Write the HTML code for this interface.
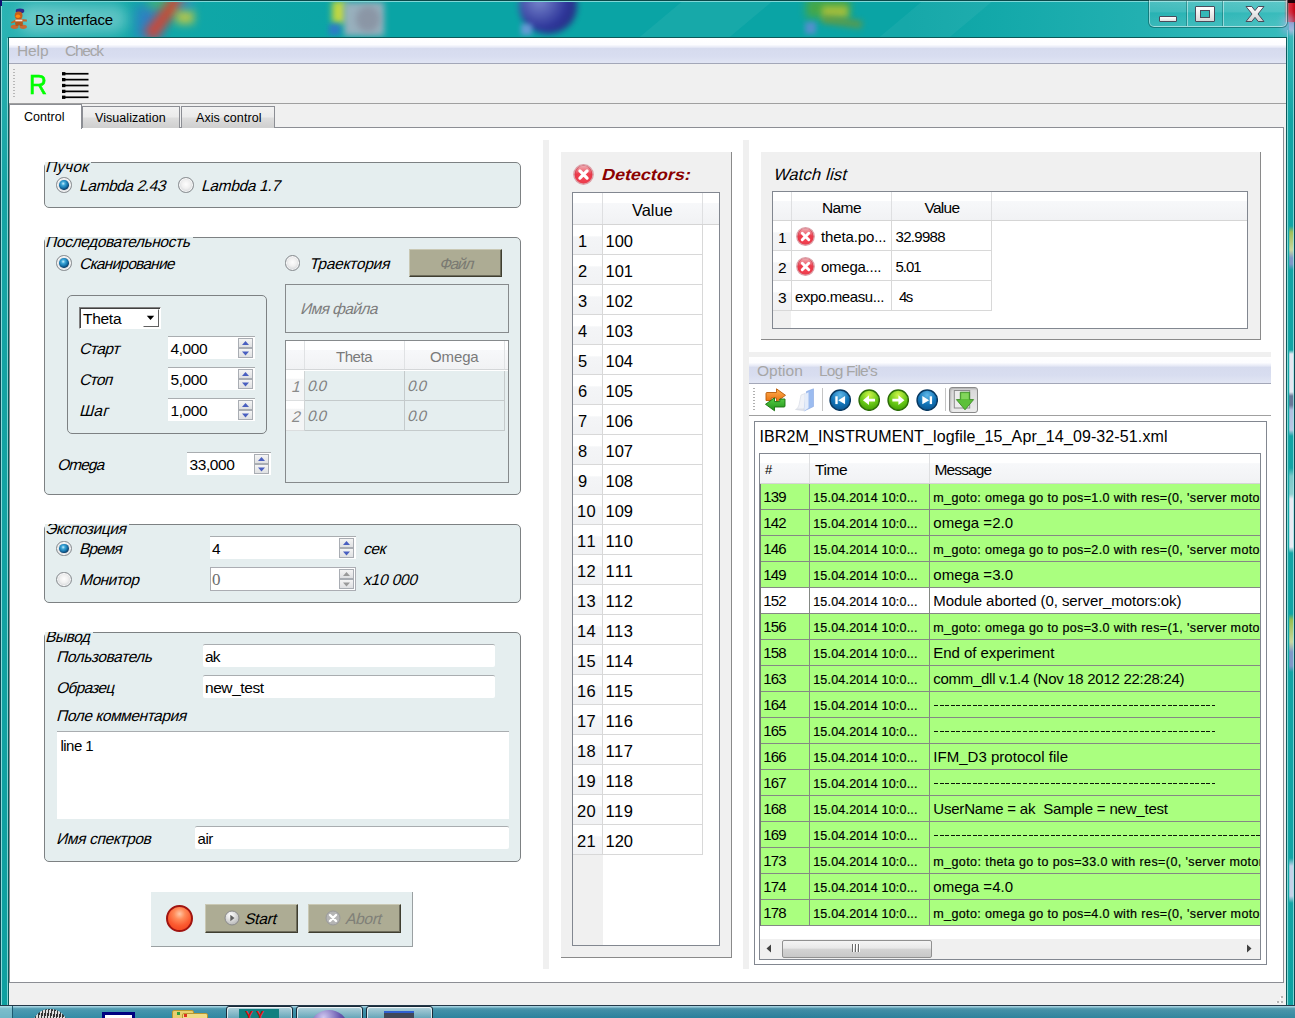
<!DOCTYPE html><html><head><meta charset="utf-8"><title>D3 interface</title><style>
*{box-sizing:border-box;margin:0;padding:0}
html,body{width:1295px;height:1018px;overflow:hidden}
body{position:relative;background:#0da5a6;font-family:"Liberation Sans",sans-serif;color:#000}
div,span,svg{position:absolute}
.t{white-space:nowrap;line-height:1;display:block}
.i{transform:skewX(-15deg);transform-origin:0 84.65%}
.b{font-weight:bold}
.gb{background:#e5eeef;border:1px solid #7d8183;border-radius:5px}
.gt{background:#e5eeef;overflow:hidden}
.inp{background:#fff;border-top:1px solid #a9adb0}
.btn{background:#adac94;border:1px solid;border-color:#c9c8b4 #3f3e30 #3f3e30 #c9c8b4;box-shadow:inset -1px -1px 0 #6e6d5c}
.hdr{background:linear-gradient(#fff 0%,#fff 31%,#f7f8fa 33%,#f1f2f4 100%)}
.rad{width:15.6px;height:15.6px;border-radius:50%;border:1px solid #868a8e;background:radial-gradient(circle at 50% 45%,#fdfdfd 0%,#f0f0f0 40%,#d2d5d8 75%,#c0c4c8 100%);box-shadow:inset 0 0 0 1px rgba(255,255,255,.7)}
.rad.on::after{content:"";position:absolute;left:2.1px;top:2.1px;width:9.4px;height:9.4px;border-radius:50%;background:radial-gradient(circle at 42% 36%,#c8f0ff 0%,#40a8d8 22%,#1878b0 48%,#0c3c68 72%,#0a2444 100%)}
.spb{background:linear-gradient(#f4f4f4,#dfe0e2);border:1px solid #a9adb3}

</style></head><body>
<div style="left:0;top:0;width:1295px;height:1018px;background:linear-gradient(90deg,#2bb3b3 0,#12a8a8 8%,#0aa4a5 30%,#0aa4a5 70%,#22b0b1 88%,#38bcbc 100%)"></div>
<div style="left:0;top:0;width:1295px;height:37px;overflow:hidden">
<div style="left:18px;top:4px;width:110px;height:30px;border-radius:15px;background:rgba(255,255,255,.32);filter:blur(7px)"></div>
<div style="left:136px;top:6px;width:26px;height:34px;background:#3b6fd0;filter:blur(6px);opacity:.7"></div>
<div style="left:148px;top:-4px;width:22px;height:14px;background:#58c058;filter:blur(5px);opacity:.55"></div>
<div style="left:158px;top:-10px;width:14px;height:52px;background:#e04028;filter:blur(4px);transform:rotate(38deg);opacity:.85"></div>
<div style="left:176px;top:10px;width:18px;height:14px;background:#e8d030;filter:blur(4px);opacity:.75"></div>
<div style="left:178px;top:-2px;width:16px;height:12px;background:#3b8fd0;filter:blur(4px);opacity:.5"></div>
<div style="left:332px;top:1px;width:14px;height:22px;background:#e0e030;filter:blur(3px);opacity:.85"></div>
<div style="left:344px;top:2px;width:40px;height:34px;background:#a8b2c0;filter:blur(3px);opacity:.9"></div>
<div style="left:356px;top:6px;width:24px;height:26px;border-radius:50%;background:#8890a0;filter:blur(3px);opacity:.8"></div>
<div style="left:329px;top:24px;width:11px;height:11px;background:#3b6fd0;filter:blur(2.5px);opacity:.75"></div>
<div style="left:519px;top:-22px;width:58px;height:56px;border-radius:50%;background:radial-gradient(circle at 35% 40%,#8088d0,#30309a 55%,#20206a);filter:blur(3px);opacity:.95"></div>
<div style="left:521px;top:24px;width:11px;height:11px;background:#7a9ae0;filter:blur(2.5px);opacity:.8"></div>
<div style="left:806px;top:-2px;width:44px;height:20px;background:#4fa838;filter:blur(4px);opacity:.85"></div>
<div style="left:822px;top:6px;width:26px;height:12px;background:#c8c838;filter:blur(3px);opacity:.7"></div>
<div style="left:822px;top:18px;width:40px;height:8px;background:#6a9838;filter:blur(3px);opacity:.8;transform:rotate(8deg)"></div>
<div style="left:805px;top:22px;width:11px;height:12px;background:#6a8ad8;filter:blur(2.5px);opacity:.75"></div>
<div style="left:660px;top:-5px;width:90px;height:50px;background:rgba(255,255,255,.055);transform:skewX(-50deg)"></div>
<div style="left:900px;top:-5px;width:70px;height:50px;background:rgba(255,255,255,.05);transform:skewX(-50deg)"></div>
</div>
<div style="left:0;top:0;width:1295px;height:1px;background:#0b4a4a"></div>
<div style="left:0;top:1px;width:1295px;height:1px;background:#7fd8d8"></div>
<div style="left:0;top:0;width:1px;height:1018px;background:#0b4a55"></div>
<div style="left:1px;top:1px;width:1px;height:1017px;background:#8adada"></div>
<div style="left:2px;top:38px;width:6px;height:968px;background:linear-gradient(#2ab0b0 0,#16a4a4 15%,#0ea0a0 100%)"></div>
<div style="left:7px;top:38px;width:1px;height:968px;background:#7fd4d4"></div>
<div style="left:0;top:0;width:2px;height:6px;background:#101070"></div>
<div style="left:1286px;top:37px;width:1px;height:969px;background:#0b5a5a"></div>
<div style="left:1287px;top:0;width:8px;height:1006px;background:linear-gradient(#38b8b8 0,#12a4a4 120px,#0ea0a0 100%)"></div>
<div style="left:1289px;top:0;width:6px;height:1006px;background:linear-gradient(#c00010 0px,#d83040 18px,#8aa0d0 24px,#a0c0d8 30px,#38b8b8 36px,#12a4a4 120px,#12a4a4 226px,#a0c058 232px,#c8d8a0 250px,#8098c8 258px,#8098c8 264px,#12a4a4 270px,#12a4a4 350px,#e4e8f2 354px,#e4e8f2 392px,#687898 396px,#687898 405px,#b0c0e0 410px,#b8c8e4 430px,#12a4a4 436px,#12a4a4 468px,#7cc8c8 476px,#90d0d0 494px,#e8ecf4 499px,#e8ecf4 547px,#12a4a4 553px,#12a4a4 614px,#98c050 620px,#c8d8a0 642px,#8098c8 652px,#8098c8 666px,#12a4a4 672px,#12a4a4 858px,#c4d2e8 866px,#c4d2e8 896px,#12a4a4 903px,#0ea0a0 1005px)"></div>
<div style="left:1288px;top:30px;width:2px;height:976px;background:linear-gradient(90deg,#18a8a8,rgba(24,168,168,.0))"></div>
<div style="left:1287px;top:30px;width:1px;height:976px;background:#86d8d8"></div>
<div style="left:1293px;top:30px;width:1px;height:976px;background:rgba(160,230,230,.75)"></div>
<div style="left:1294px;top:6px;width:1px;height:1000px;background:#0b4a55"></div>
<div style="left:1284px;top:0;width:11px;height:22px;background:linear-gradient(90deg,rgba(224,48,64,0) 0,rgba(224,48,64,.85) 45%,#d02030 70%,#c00010 100%)"></div>
<div style="left:1282px;top:16px;width:13px;height:18px;background:#9ab0e0;filter:blur(3px);opacity:.55"></div>
<div style="left:1288px;top:0;width:7px;height:3px;background:#200008"></div>
<svg style="left:10px;top:8px" width="18" height="22" viewBox="0 0 18 22">
<ellipse cx="10" cy="3" rx="4.3" ry="2.4" fill="#2c2c8c"/>
<ellipse cx="8.6" cy="7.4" rx="3.9" ry="4" fill="#c4601c"/>
<ellipse cx="8" cy="8.2" rx="2.2" ry="1.7" fill="#ff8c10"/>
<rect x="5.2" y="10.5" width="7.6" height="7" rx="2.2" fill="#b4581c"/>
<path d="M0.8 14.3 L5.5 11.4 L12.5 11.2 L16.8 11.6 L17 13.4 L12.5 13.6 L5.8 14 L1.4 15.4 Z" fill="#c06428"/>
<rect x="5.4" y="11.6" width="7" height="1.7" fill="#ece4dc"/>
<ellipse cx="4.6" cy="18.8" rx="3.9" ry="2.1" fill="#c86a34"/>
<ellipse cx="13.2" cy="18.8" rx="3.7" ry="2.1" fill="#c86a34"/>
<rect x="5.6" y="15" width="2.6" height="3" fill="#b4581c"/><rect x="10" y="15" width="2.6" height="3" fill="#b4581c"/>
</svg>
<span class="t " style="left:35px;top:11px;font-size:15px;letter-spacing:-0.261px;line-height:17px;color:#000;">D3 interface</span>
<div style="left:1149px;top:0;width:138px;height:27px;border:1px solid rgba(255,255,255,.45);border-top:none;border-radius:0 0 5px 5px;background:linear-gradient(rgba(255,255,255,.20),rgba(255,255,255,.12) 45%,rgba(255,255,255,.02) 50%,rgba(255,255,255,.10))"></div>
<div style="left:1148px;top:0;width:140px;height:28px;border:1px solid rgba(0,60,60,.45);border-top:none;border-radius:0 0 6px 6px"></div>
<div style="left:1187px;top:1px;width:1px;height:25px;background:rgba(255,255,255,.45)"></div><div style="left:1186px;top:1px;width:1px;height:25px;background:rgba(0,70,70,.35)"></div>
<div style="left:1223px;top:1px;width:1px;height:25px;background:rgba(255,255,255,.45)"></div><div style="left:1222px;top:1px;width:1px;height:25px;background:rgba(0,70,70,.35)"></div>
<div style="left:1159px;top:16px;width:18px;height:6px;background:linear-gradient(#fff,#e0e0e0);border:1px solid #4a4a5a;border-radius:1px"></div>
<div style="left:1195px;top:6px;width:20px;height:16px;background:linear-gradient(#fff,#d8d8d8);border:1px solid #4a4a5a;border-radius:1px"></div>
<div style="left:1200px;top:10px;width:10px;height:8px;background:#34b8b8;border:1px solid #4a4a5a"></div>
<svg style="left:1245px;top:5px" width="20" height="18" viewBox="0 0 20 18"><defs><linearGradient id="xg" x1="0" y1="0" x2="0" y2="1"><stop offset="0" stop-color="#fff"/><stop offset="1" stop-color="#d0d0d0"/></linearGradient></defs>
<path d="M1 1.5 L6.8 1.5 L10 5.6 L13.2 1.5 L19 1.5 L13 9 L19 16.5 L13.2 16.5 L10 12.4 L6.8 16.5 L1 16.5 L7 9 Z" fill="url(#xg)" stroke="#4a4a5a" stroke-width="1" stroke-linejoin="round"/></svg>
<div style="left:8px;top:37px;width:1279px;height:969px;background:#0b5a5a"></div>
<div style="left:9px;top:38px;width:1277px;height:967px;background:#f0f0f0"></div>
<div style="left:9px;top:38px;width:1277px;height:26px;background:linear-gradient(#fff 0,#fdfdff 25%,#e6e9f6 36%,#d6dbee 40%,#d8ddf0 70%,#e2e6f4 100%)"></div>
<div style="left:9px;top:63px;width:1277px;height:1px;background:#a3a7b8"></div>
<span class="t " style="left:17px;top:42px;font-size:15.5px;letter-spacing:-0.126px;line-height:17px;color:#a6a6a6;">Help</span>
<span class="t " style="left:65px;top:42px;font-size:15.5px;letter-spacing:-1.234px;line-height:17px;color:#a6a6a6;">Check</span>
<div style="left:9px;top:103px;width:1277px;height:1px;background:#a0a0a0"></div>
<div style="left:13px;top:69px;width:2px;height:30px;background:repeating-linear-gradient(#b8b8b8 0,#b8b8b8 1px,#f0f0f0 1px,#f0f0f0 3px)"></div>
<span class="t " style="left:28.5px;top:69px;font-size:28px;transform:scaleX(0.8902);transform-origin:0 80.65%;line-height:31px;color:#00ff00;-webkit-text-stroke:0.6px #00ff00;">R</span>
<svg style="left:61.5px;top:71.5px" width="27" height="27" viewBox="0 0 27 27">
<g fill="#000"><rect x="1" y="0.90" width="25.5" height="1.7"/><rect x="0" y="0.10" width="3.4" height="3.3"/><rect x="1" y="6.78" width="25.5" height="1.7"/><rect x="0" y="5.98" width="3.4" height="3.3"/><rect x="1" y="12.66" width="25.5" height="1.7"/><rect x="0" y="11.86" width="3.4" height="3.3"/><rect x="1" y="18.54" width="25.5" height="1.7"/><rect x="0" y="17.74" width="3.4" height="3.3"/><rect x="1" y="24.42" width="25.5" height="1.7"/><rect x="0" y="23.62" width="3.4" height="3.3"/></g></svg>
<div style="left:9px;top:127px;width:1275px;height:856px;background:#fff;border:1px solid #8c8e94"></div>
<div style="left:82px;top:106px;width:98px;height:22px;border:1px solid #8c8e94;border-bottom:none;background:linear-gradient(#f2f2f2 0,#ebebeb 48%,#dddddd 52%,#cfcfcf 100%)"></div>
<div style="left:181px;top:106px;width:94px;height:22px;border:1px solid #8c8e94;border-bottom:none;background:linear-gradient(#f2f2f2 0,#ebebeb 48%,#dddddd 52%,#cfcfcf 100%)"></div>
<div style="left:9px;top:104px;width:73px;height:25px;border:1px solid #8c8e94;border-bottom:none;background:#fff"></div>
<span class="t " style="left:24px;top:110px;font-size:12.5px;letter-spacing:0.051px;line-height:14px;">Control</span>
<span class="t " style="left:95px;top:111px;font-size:12.5px;letter-spacing:0.054px;line-height:14px;">Visualization</span>
<span class="t " style="left:196px;top:111px;font-size:12.5px;letter-spacing:0.081px;line-height:14px;">Axis control</span>
<svg style="left:1271px;top:992px" width="14" height="14" viewBox="0 0 14 14" shape-rendering="crispEdges"><g fill="#b4b4b4"><rect x="10" y="4" width="2" height="2"/><rect x="10" y="8.5" width="2" height="2"/><rect x="5.5" y="8.5" width="2" height="2"/><rect x="10" y="13" width="2" height="1"/><rect x="5.5" y="13" width="2" height="1"/><rect x="1" y="13" width="2" height="1"/></g><g fill="#fff"><rect x="9" y="5" width="1" height="1.5"/><rect x="9" y="9.5" width="1" height="1.5"/><rect x="4.5" y="9.5" width="1" height="1.5"/></g></svg>
<div style="left:0;top:1005px;width:1295px;height:13px;background:linear-gradient(90deg,#368ea8 0,#2d86a0 20%,#297e9a 60%,#34889f 100%)"></div>
<div style="left:0;top:1005px;width:1295px;height:13px;background:linear-gradient(rgba(255,255,255,.55) 0,rgba(255,255,255,.28) 12%,rgba(255,255,255,.10) 40%,rgba(255,255,255,0) 100%)"></div>
<div style="left:0;top:1005px;width:1295px;height:1px;background:#243848"></div>
<div style="left:0;top:1006px;width:1295px;height:2px;background:linear-gradient(rgba(200,236,248,.75),rgba(200,236,248,.15))"></div>
<div style="left:0;top:1006px;width:13px;height:12px;background:rgba(180,230,235,.45);border-right:1px solid #1d5a70"></div>
<div style="left:33px;top:1009px;width:34px;height:30px;border-radius:50%;background:repeating-linear-gradient(100deg,#333 0,#333 1.5px,#ddd 1.5px,#ddd 3px)"></div>
<div style="left:102px;top:1012px;width:33px;height:20px;border:3px solid #000080;background:#fff"></div>
<div style="left:172px;top:1010px;width:22px;height:12px;background:#e8d070;border:1px solid #b89830;border-radius:2px"></div>
<div style="left:182px;top:1013px;width:26px;height:12px;background:#f0dc88;border:1px solid #b89830;border-radius:2px"></div>
<div style="left:177px;top:1012px;width:3px;height:3px;background:#30a040"></div><div style="left:184px;top:1014px;width:3px;height:3px;background:#e03020"></div>
<div style="left:226px;top:1006px;width:67px;height:16px;border:1px solid #1a2a38;border-radius:3px 3px 0 0;background:linear-gradient(rgba(255,255,255,.55),rgba(255,255,255,.2))"></div>
<div style="left:227px;top:1007px;width:65px;height:15px;border:1px solid rgba(255,255,255,.7);border-radius:3px 3px 0 0"></div>
<div style="left:296px;top:1006px;width:67px;height:16px;border:1px solid #1a2a38;border-radius:3px 3px 0 0;background:linear-gradient(rgba(255,255,255,.55),rgba(255,255,255,.2))"></div>
<div style="left:297px;top:1007px;width:65px;height:15px;border:1px solid rgba(255,255,255,.7);border-radius:3px 3px 0 0"></div>
<div style="left:366px;top:1006px;width:67px;height:16px;border:1px solid #1a2a38;border-radius:3px 3px 0 0;background:linear-gradient(rgba(255,255,255,.55),rgba(255,255,255,.2))"></div>
<div style="left:367px;top:1007px;width:65px;height:15px;border:1px solid rgba(255,255,255,.7);border-radius:3px 3px 0 0"></div>
<div style="left:239px;top:1009px;width:40px;height:12px;background:#108080"></div>
<span class="t b" style="left:245px;top:1009px;font-size:12px;line-height:14px;color:#e01010;">Y  Y</span>
<div style="left:311px;top:1010px;width:36px;height:30px;border-radius:50%;background:radial-gradient(circle at 35% 25%,#d0c8f0,#6a5ab0 50%,#30287a)"></div>
<div style="left:384px;top:1011px;width:30px;height:10px;background:#404858;border-top:2px solid #3060d0"></div>
<div class="gb" style="left:44px;top:162px;width:477px;height:46px;"></div><div class="gt" style="left:45px;top:162px;width:46px;height:13px"><span class="t i" style="left:0px;top:-4px;font-size:15.5px;letter-spacing:0.108px;line-height:17px;transform-origin:0 82.35%;">Пучок</span></div>
<div class="rad on" style="left:56.1px;top:177.2px"></div>
<span class="t i" style="left:79px;top:177px;font-size:15.5px;letter-spacing:-0.419px;line-height:17px;transform-origin:0 82.35%;">Lambda 2.43</span>
<div class="rad" style="left:178.1px;top:177.2px"></div>
<span class="t i" style="left:201px;top:177px;font-size:15.5px;letter-spacing:-0.341px;line-height:17px;transform-origin:0 82.35%;">Lambda 1.7</span>
<div class="gb" style="left:44px;top:237px;width:477px;height:258px;"></div><div class="gt" style="left:45px;top:237px;width:148px;height:13px"><span class="t i" style="left:0px;top:-4px;font-size:15.5px;letter-spacing:-0.370px;line-height:17px;transform-origin:0 82.35%;">Последовательность</span></div>
<div class="rad on" style="left:56.1px;top:255.2px"></div>
<span class="t i" style="left:79px;top:255px;font-size:15.5px;letter-spacing:-0.774px;line-height:17px;transform-origin:0 82.35%;">Сканирование</span>
<div class="rad" style="left:284.6px;top:255.2px"></div>
<span class="t i" style="left:309px;top:255px;font-size:15.5px;letter-spacing:-0.259px;line-height:17px;transform-origin:0 82.35%;">Траектория</span>
<div class="btn" style="left:409px;top:249px;width:93px;height:28px;"></div>
<span class="t i" style="left:438.5px;top:255px;font-size:15.5px;letter-spacing:-1.269px;line-height:17px;color:#7a7a72;transform-origin:0 82.35%;">Файл</span>
<div class="" style="left:285px;top:284px;width:224px;height:49px;border:1px solid #868a8c;background:#e5eeef"></div>
<span class="t i" style="left:299.5px;top:300px;font-size:15.5px;letter-spacing:-0.612px;line-height:17px;color:#7d7d7d;transform-origin:0 82.35%;">Имя файла</span>
<div class="gb" style="left:67px;top:295px;width:200px;height:139px;"></div>
<div class="" style="left:79px;top:307px;width:82px;height:22px;background:#fff;border:1px solid;border-color:#808080 #fff #fff #808080;box-shadow:inset 1px 1px 0 #404040"></div>
<span class="t " style="left:83px;top:310px;font-size:15.5px;letter-spacing:-0.284px;line-height:17px;">Theta</span>
<div class="" style="left:143px;top:309px;width:16px;height:18px;background:#fff;border:1px solid;border-color:#fff #606060 #606060 #fff"></div>
<svg style="left:146px;top:315px" width="9" height="6" viewBox="0 0 9 6"><path d="M0.8 0.8 L8.2 0.8 L4.5 5 Z" fill="#000"/></svg>
<span class="t i" style="left:79px;top:340px;font-size:15.5px;letter-spacing:-0.455px;line-height:17px;transform-origin:0 82.35%;">Старт</span>
<div class="inp" style="left:168px;top:336px;width:87px;height:23px;"></div><span class="t " style="left:170.5px;top:340px;font-size:15.5px;letter-spacing:-0.447px;line-height:17px;color:#000;">4,000</span><div class="spb" style="left:238px;top:337.5px;width:15px;height:10px"></div><div class="spb" style="left:238px;top:347.5px;width:15px;height:10px"></div><svg style="left:238px;top:337.5px" width="15" height="10" viewBox="0 0 15 10"><path d="M4 7 L7.5 3 L11 7 Z" fill="#4a5fc0"/></svg><svg style="left:238px;top:347.5px" width="15" height="10" viewBox="0 0 15 10"><path d="M4 3.5 L7.5 7.5 L11 3.5 Z" fill="#4a5fc0"/></svg>
<span class="t i" style="left:79px;top:371px;font-size:15.5px;letter-spacing:-0.677px;line-height:17px;transform-origin:0 82.35%;">Стоп</span>
<div class="inp" style="left:168px;top:367px;width:87px;height:23px;"></div><span class="t " style="left:170.5px;top:371px;font-size:15.5px;letter-spacing:-0.447px;line-height:17px;color:#000;">5,000</span><div class="spb" style="left:238px;top:368.5px;width:15px;height:10px"></div><div class="spb" style="left:238px;top:378.5px;width:15px;height:10px"></div><svg style="left:238px;top:368.5px" width="15" height="10" viewBox="0 0 15 10"><path d="M4 7 L7.5 3 L11 7 Z" fill="#4a5fc0"/></svg><svg style="left:238px;top:378.5px" width="15" height="10" viewBox="0 0 15 10"><path d="M4 3.5 L7.5 7.5 L11 3.5 Z" fill="#4a5fc0"/></svg>
<span class="t i" style="left:79px;top:402px;font-size:15.5px;letter-spacing:0.160px;line-height:17px;transform-origin:0 82.35%;">Шаг</span>
<div class="inp" style="left:168px;top:398px;width:87px;height:23px;"></div><span class="t " style="left:170.5px;top:402px;font-size:15.5px;letter-spacing:-0.447px;line-height:17px;color:#000;">1,000</span><div class="spb" style="left:238px;top:399.5px;width:15px;height:10px"></div><div class="spb" style="left:238px;top:409.5px;width:15px;height:10px"></div><svg style="left:238px;top:399.5px" width="15" height="10" viewBox="0 0 15 10"><path d="M4 7 L7.5 3 L11 7 Z" fill="#4a5fc0"/></svg><svg style="left:238px;top:409.5px" width="15" height="10" viewBox="0 0 15 10"><path d="M4 3.5 L7.5 7.5 L11 3.5 Z" fill="#4a5fc0"/></svg>
<span class="t i" style="left:56.5px;top:456px;font-size:15.5px;letter-spacing:-0.932px;line-height:17px;transform-origin:0 82.35%;">Omega</span>
<div class="inp" style="left:187px;top:452px;width:84px;height:23px;"></div><span class="t " style="left:189.5px;top:456px;font-size:15.5px;letter-spacing:-0.422px;line-height:17px;color:#000;">33,000</span><div class="spb" style="left:254px;top:453.5px;width:15px;height:10px"></div><div class="spb" style="left:254px;top:463.5px;width:15px;height:10px"></div><svg style="left:254px;top:453.5px" width="15" height="10" viewBox="0 0 15 10"><path d="M4 7 L7.5 3 L11 7 Z" fill="#4a5fc0"/></svg><svg style="left:254px;top:463.5px" width="15" height="10" viewBox="0 0 15 10"><path d="M4 3.5 L7.5 7.5 L11 3.5 Z" fill="#4a5fc0"/></svg>
<div class="" style="left:285px;top:340px;width:224px;height:143px;border:1px solid #868a8c;background:#e5eeef"></div>
<div class="hdr" style="left:286px;top:341px;width:222px;height:28px;"></div>
<div class="" style="left:286px;top:370px;width:222px;height:1px;background:#fff"></div>
<div class="" style="left:286px;top:371px;width:18px;height:60px;background:linear-gradient(#fff 0,#fff 12%,#f4f5f6 14%,#f4f5f6 50%,#fff 50%,#fff 62%,#f4f5f6 64%,#f4f5f6 100%)"></div>
<div class="" style="left:286px;top:369px;width:222px;height:1px;background:#d4d6d8"></div>
<div class="" style="left:304px;top:341px;width:1px;height:28px;background:#e0e2e4"></div>
<div class="" style="left:404px;top:341px;width:1px;height:28px;background:#e0e2e4"></div>
<div class="" style="left:404px;top:371px;width:1px;height:60px;background:#c4cacb"></div>
<div class="" style="left:504px;top:341px;width:1px;height:28px;background:#e0e2e4"></div>
<div class="" style="left:504px;top:371px;width:1px;height:60px;background:#c4cacb"></div>
<div class="" style="left:304px;top:371px;width:1px;height:60px;background:#d0d4d5"></div>
<div class="" style="left:305px;top:400px;width:200px;height:1px;background:#c4cacb"></div>
<div class="" style="left:305px;top:430px;width:200px;height:1px;background:#c4cacb"></div>
<div class="" style="left:286px;top:400px;width:18px;height:1px;background:#dcdedf"></div>
<div class="" style="left:286px;top:430px;width:18px;height:1px;background:#dcdedf"></div>
<span class="t " style="left:336px;top:348px;font-size:15px;letter-spacing:-0.464px;line-height:17px;color:#7a7a7a;">Theta</span>
<span class="t " style="left:430px;top:348px;font-size:15px;letter-spacing:-0.122px;line-height:17px;color:#7a7a7a;">Omega</span>
<span class="t i" style="left:290.5px;top:378px;font-size:15.5px;line-height:17px;color:#8a8a8a;transform-origin:0 82.35%;">1</span>
<span class="t i" style="left:290.5px;top:408px;font-size:15.5px;line-height:17px;color:#8a8a8a;transform-origin:0 82.35%;">2</span>
<span class="t i" style="left:307px;top:377px;font-size:15px;letter-spacing:-1.026px;line-height:17px;color:#808080;transform-origin:0 82.35%;">0.0</span>
<span class="t i" style="left:407px;top:377px;font-size:15px;letter-spacing:-1.026px;line-height:17px;color:#808080;transform-origin:0 82.35%;">0.0</span>
<span class="t i" style="left:307px;top:407px;font-size:15px;letter-spacing:-1.026px;line-height:17px;color:#808080;transform-origin:0 82.35%;">0.0</span>
<span class="t i" style="left:407px;top:407px;font-size:15px;letter-spacing:-1.026px;line-height:17px;color:#808080;transform-origin:0 82.35%;">0.0</span>
<div class="gb" style="left:44px;top:524px;width:477px;height:79px;"></div><div class="gt" style="left:45px;top:524px;width:84px;height:13px"><span class="t i" style="left:0px;top:-4px;font-size:15.5px;letter-spacing:-0.398px;line-height:17px;transform-origin:0 82.35%;">Экспозиция</span></div>
<div class="rad on" style="left:56.1px;top:540.7px"></div>
<span class="t i" style="left:79px;top:540px;font-size:15.5px;letter-spacing:-1.007px;line-height:17px;transform-origin:0 82.35%;">Время</span>
<div class="rad" style="left:56.1px;top:571.7px"></div>
<span class="t i" style="left:79px;top:571px;font-size:15.5px;letter-spacing:-0.548px;line-height:17px;transform-origin:0 82.35%;">Монитор</span>
<div class="inp" style="left:209.5px;top:536px;width:146px;height:23px;"></div><span class="t " style="left:212.0px;top:540px;font-size:15.5px;line-height:17px;color:#000;">4</span><div class="spb" style="left:338.5px;top:537.5px;width:15px;height:10px"></div><div class="spb" style="left:338.5px;top:547.5px;width:15px;height:10px"></div><svg style="left:338.5px;top:537.5px" width="15" height="10" viewBox="0 0 15 10"><path d="M4 7 L7.5 3 L11 7 Z" fill="#4a5fc0"/></svg><svg style="left:338.5px;top:547.5px" width="15" height="10" viewBox="0 0 15 10"><path d="M4 3.5 L7.5 7.5 L11 3.5 Z" fill="#4a5fc0"/></svg>
<div class="inp" style="left:209.5px;top:567px;width:146px;height:23.5px;border:1px solid #abadb3;"></div><span class="t " style="left:212.0px;top:570px;font-size:17px;line-height:19px;color:#6d6d6d;font-family:'Liberation Serif',serif;">0</span><div class="spb" style="left:338.5px;top:568.5px;width:15px;height:10px"></div><div class="spb" style="left:338.5px;top:579.0px;width:15px;height:10px"></div><svg style="left:338.5px;top:568.5px" width="15" height="10" viewBox="0 0 15 10"><path d="M4 7 L7.5 3 L11 7 Z" fill="#9a9a9a"/></svg><svg style="left:338.5px;top:579.0px" width="15" height="10" viewBox="0 0 15 10"><path d="M4 3.5 L7.5 7.5 L11 3.5 Z" fill="#9a9a9a"/></svg>
<span class="t i" style="left:363px;top:540px;font-size:15.5px;letter-spacing:-0.426px;line-height:17px;transform-origin:0 82.35%;">сек</span>
<span class="t i" style="left:363px;top:571px;font-size:15.5px;letter-spacing:-0.226px;line-height:17px;transform-origin:0 82.35%;">x10 000</span>
<div class="gb" style="left:44px;top:632px;width:477px;height:230px;"></div><div class="gt" style="left:45px;top:632px;width:48px;height:13px"><span class="t i" style="left:0px;top:-4px;font-size:15.5px;letter-spacing:-0.516px;line-height:17px;transform-origin:0 82.35%;">Вывод</span></div>
<span class="t i" style="left:56px;top:648px;font-size:15.5px;letter-spacing:-0.435px;line-height:17px;transform-origin:0 82.35%;">Пользователь</span>
<div class="inp" style="left:202.5px;top:644px;width:292.5px;height:23px;border-radius:2px"></div>
<span class="t " style="left:205px;top:648px;font-size:15.5px;letter-spacing:-0.870px;line-height:17px;">ak</span>
<span class="t i" style="left:56px;top:679px;font-size:15.5px;letter-spacing:-0.722px;line-height:17px;transform-origin:0 82.35%;">Образец</span>
<div class="inp" style="left:202.5px;top:675px;width:292.5px;height:23px;border-radius:2px"></div>
<span class="t " style="left:205px;top:679px;font-size:15.5px;letter-spacing:-0.434px;line-height:17px;">new_test</span>
<span class="t i" style="left:56px;top:707px;font-size:15.5px;letter-spacing:-0.439px;line-height:17px;transform-origin:0 82.35%;">Поле комментария</span>
<div class="inp" style="left:56.5px;top:731px;width:452.5px;height:87.5px;border-radius:0"></div>
<span class="t " style="left:60.5px;top:737px;font-size:15px;letter-spacing:-0.532px;line-height:17px;">line 1</span>
<span class="t i" style="left:56px;top:830px;font-size:15.5px;letter-spacing:-0.363px;line-height:17px;transform-origin:0 82.35%;">Имя спектров</span>
<div class="inp" style="left:195px;top:826px;width:314px;height:23px;border-radius:2px"></div>
<span class="t " style="left:197.5px;top:830px;font-size:15px;letter-spacing:-0.435px;line-height:17px;">air</span>
<div class="" style="left:151px;top:892px;width:262px;height:55px;background:#e5eeef;border-right:1px solid #9aa0a2;border-bottom:1px solid #9aa0a2"></div>
<div style="left:165.5px;top:904.5px;width:27px;height:27px;border-radius:50%;border:2px solid #a01410;background:radial-gradient(circle at 50% 30%,#ffc8a8 0,#ff8a58 28%,#fb5a30 60%,#ee3c18 100%)"></div>
<div class="btn" style="left:205px;top:904px;width:93px;height:29px;"></div>
<div class="btn" style="left:308px;top:904px;width:93px;height:29px;"></div>
<svg style="left:224px;top:910px" width="16" height="16" viewBox="0 0 16 16"><defs><radialGradient id="pg" cx=".4" cy=".3" r=".8"><stop offset="0" stop-color="#fff"/><stop offset="1" stop-color="#b0b0b0"/></radialGradient></defs><circle cx="8" cy="8" r="7" fill="url(#pg)" stroke="#8a8a8a" stroke-width="1"/><path d="M6.3 4.8 L10.5 8 L6.3 11.2 Z" fill="#606060"/></svg>
<span class="t i" style="left:244px;top:910px;font-size:15.5px;letter-spacing:-0.233px;line-height:17px;transform-origin:0 82.35%;">Start</span>
<svg style="left:325px;top:910px" width="16" height="16" viewBox="0 0 16 16"><circle cx="8" cy="8" r="7" fill="#b4b4b4" stroke="#9a9a9a" stroke-width="1"/><path d="M5 5 L11 11 M11 5 L5 11" stroke="#fff" stroke-width="2.4" stroke-linecap="round"/></svg>
<span class="t i" style="left:344.5px;top:910px;font-size:15.5px;letter-spacing:-0.312px;line-height:17px;color:#808078;transform-origin:0 82.35%;">Abort</span>
<div class="" style="left:543px;top:140px;width:6px;height:829px;background:#f0f0f0"></div>
<div class="" style="left:561px;top:152px;width:171px;height:806px;background:#f0f0f0;border-right:1px solid #8a8a8a;border-bottom:1px solid #8a8a8a"></div>
<svg style="left:572.5px;top:163.5px" width="21" height="21" viewBox="0 0 20 20"><defs>
<radialGradient id="egd" cx=".5" cy=".6" r=".6"><stop offset="0" stop-color="#f84858"/><stop offset=".7" stop-color="#e83848"/><stop offset="1" stop-color="#c82838"/></radialGradient>
<linearGradient id="ehd" x1="0" y1="0" x2="0" y2="1"><stop offset="0" stop-color="#fff" stop-opacity=".6"/><stop offset="1" stop-color="#fff" stop-opacity=".05"/></linearGradient></defs>
<circle cx="10" cy="10" r="9.2" fill="url(#egd)" stroke="#dca0a8" stroke-width="1.4"/>
<path d="M2.2 9.5 A7.8 7.8 0 0 1 17.8 9.5 Q10 6.5 2.2 9.5 Z" fill="url(#ehd)"/>
<path d="M6.6 6.6 L13.4 13.4 M13.4 6.6 L6.6 13.4" stroke="#fff" stroke-width="3.1" stroke-linecap="round"/></svg>
<span class="t b i" style="left:601px;top:166px;font-size:16px;transform:skewX(-15deg) scaleX(1.1196);transform-origin:0 82.35%;line-height:17px;color:#8b0000;">Detectors:</span>
<div class="" style="left:572px;top:192px;width:148px;height:754px;background:#fff;border:1px solid #828790"></div>
<div class="hdr" style="left:573px;top:193px;width:146px;height:31px;"></div>
<div class="" style="left:573px;top:224px;width:146px;height:1px;background:#d5d5d5"></div>
<div class="" style="left:602px;top:193px;width:1px;height:31px;background:#dedfe1"></div>
<div class="" style="left:702px;top:193px;width:1px;height:31px;background:#dedfe1"></div>
<span class="t " style="left:632px;top:201px;font-size:16.5px;letter-spacing:-0.044px;line-height:18px;">Value</span>
<div class="" style="left:573px;top:225px;width:30px;height:720px;background:#f0f0f0"></div>
<div class="" style="left:573px;top:225px;width:29px;height:30px;background:linear-gradient(#fff 0,#fff 35%,#f4f5f7 40%,#f1f2f4 100%)"></div>
<div class="" style="left:573px;top:254px;width:29px;height:1px;background:#d8d8d8"></div>
<div class="" style="left:602px;top:254px;width:101px;height:1px;background:#d8d8d8"></div>
<span class="t " style="left:578px;top:232px;font-size:16.5px;letter-spacing:0.323px;line-height:18px;">1</span>
<span class="t " style="left:605.5px;top:232px;font-size:16.5px;letter-spacing:-0.015px;line-height:18px;">100</span>
<div class="" style="left:573px;top:255px;width:29px;height:30px;background:linear-gradient(#fff 0,#fff 35%,#f4f5f7 40%,#f1f2f4 100%)"></div>
<div class="" style="left:573px;top:284px;width:29px;height:1px;background:#d8d8d8"></div>
<div class="" style="left:602px;top:284px;width:101px;height:1px;background:#d8d8d8"></div>
<span class="t " style="left:578px;top:262px;font-size:16.5px;letter-spacing:0.323px;line-height:18px;">2</span>
<span class="t " style="left:605.5px;top:262px;font-size:16.5px;letter-spacing:-0.015px;line-height:18px;">101</span>
<div class="" style="left:573px;top:285px;width:29px;height:30px;background:linear-gradient(#fff 0,#fff 35%,#f4f5f7 40%,#f1f2f4 100%)"></div>
<div class="" style="left:573px;top:314px;width:29px;height:1px;background:#d8d8d8"></div>
<div class="" style="left:602px;top:314px;width:101px;height:1px;background:#d8d8d8"></div>
<span class="t " style="left:578px;top:292px;font-size:16.5px;letter-spacing:0.323px;line-height:18px;">3</span>
<span class="t " style="left:605.5px;top:292px;font-size:16.5px;letter-spacing:-0.015px;line-height:18px;">102</span>
<div class="" style="left:573px;top:315px;width:29px;height:30px;background:linear-gradient(#fff 0,#fff 35%,#f4f5f7 40%,#f1f2f4 100%)"></div>
<div class="" style="left:573px;top:344px;width:29px;height:1px;background:#d8d8d8"></div>
<div class="" style="left:602px;top:344px;width:101px;height:1px;background:#d8d8d8"></div>
<span class="t " style="left:578px;top:322px;font-size:16.5px;letter-spacing:0.323px;line-height:18px;">4</span>
<span class="t " style="left:605.5px;top:322px;font-size:16.5px;letter-spacing:-0.015px;line-height:18px;">103</span>
<div class="" style="left:573px;top:345px;width:29px;height:30px;background:linear-gradient(#fff 0,#fff 35%,#f4f5f7 40%,#f1f2f4 100%)"></div>
<div class="" style="left:573px;top:374px;width:29px;height:1px;background:#d8d8d8"></div>
<div class="" style="left:602px;top:374px;width:101px;height:1px;background:#d8d8d8"></div>
<span class="t " style="left:578px;top:352px;font-size:16.5px;letter-spacing:0.323px;line-height:18px;">5</span>
<span class="t " style="left:605.5px;top:352px;font-size:16.5px;letter-spacing:-0.015px;line-height:18px;">104</span>
<div class="" style="left:573px;top:375px;width:29px;height:30px;background:linear-gradient(#fff 0,#fff 35%,#f4f5f7 40%,#f1f2f4 100%)"></div>
<div class="" style="left:573px;top:404px;width:29px;height:1px;background:#d8d8d8"></div>
<div class="" style="left:602px;top:404px;width:101px;height:1px;background:#d8d8d8"></div>
<span class="t " style="left:578px;top:382px;font-size:16.5px;letter-spacing:0.323px;line-height:18px;">6</span>
<span class="t " style="left:605.5px;top:382px;font-size:16.5px;letter-spacing:-0.015px;line-height:18px;">105</span>
<div class="" style="left:573px;top:405px;width:29px;height:30px;background:linear-gradient(#fff 0,#fff 35%,#f4f5f7 40%,#f1f2f4 100%)"></div>
<div class="" style="left:573px;top:434px;width:29px;height:1px;background:#d8d8d8"></div>
<div class="" style="left:602px;top:434px;width:101px;height:1px;background:#d8d8d8"></div>
<span class="t " style="left:578px;top:412px;font-size:16.5px;letter-spacing:0.323px;line-height:18px;">7</span>
<span class="t " style="left:605.5px;top:412px;font-size:16.5px;letter-spacing:-0.015px;line-height:18px;">106</span>
<div class="" style="left:573px;top:435px;width:29px;height:30px;background:linear-gradient(#fff 0,#fff 35%,#f4f5f7 40%,#f1f2f4 100%)"></div>
<div class="" style="left:573px;top:464px;width:29px;height:1px;background:#d8d8d8"></div>
<div class="" style="left:602px;top:464px;width:101px;height:1px;background:#d8d8d8"></div>
<span class="t " style="left:578px;top:442px;font-size:16.5px;letter-spacing:0.323px;line-height:18px;">8</span>
<span class="t " style="left:605.5px;top:442px;font-size:16.5px;letter-spacing:-0.015px;line-height:18px;">107</span>
<div class="" style="left:573px;top:465px;width:29px;height:30px;background:linear-gradient(#fff 0,#fff 35%,#f4f5f7 40%,#f1f2f4 100%)"></div>
<div class="" style="left:573px;top:494px;width:29px;height:1px;background:#d8d8d8"></div>
<div class="" style="left:602px;top:494px;width:101px;height:1px;background:#d8d8d8"></div>
<span class="t " style="left:578px;top:472px;font-size:16.5px;letter-spacing:0.323px;line-height:18px;">9</span>
<span class="t " style="left:605.5px;top:472px;font-size:16.5px;letter-spacing:-0.015px;line-height:18px;">108</span>
<div class="" style="left:573px;top:495px;width:29px;height:30px;background:linear-gradient(#fff 0,#fff 35%,#f4f5f7 40%,#f1f2f4 100%)"></div>
<div class="" style="left:573px;top:524px;width:29px;height:1px;background:#d8d8d8"></div>
<div class="" style="left:602px;top:524px;width:101px;height:1px;background:#d8d8d8"></div>
<span class="t " style="left:577px;top:502px;font-size:16.5px;letter-spacing:0.447px;line-height:18px;">10</span>
<span class="t " style="left:605.5px;top:502px;font-size:16.5px;letter-spacing:-0.015px;line-height:18px;">109</span>
<div class="" style="left:573px;top:525px;width:29px;height:30px;background:linear-gradient(#fff 0,#fff 35%,#f4f5f7 40%,#f1f2f4 100%)"></div>
<div class="" style="left:573px;top:554px;width:29px;height:1px;background:#d8d8d8"></div>
<div class="" style="left:602px;top:554px;width:101px;height:1px;background:#d8d8d8"></div>
<span class="t " style="left:577px;top:532px;font-size:16.5px;letter-spacing:1.671px;line-height:18px;">11</span>
<span class="t " style="left:605.5px;top:532px;font-size:16.5px;letter-spacing:0.597px;line-height:18px;">110</span>
<div class="" style="left:573px;top:555px;width:29px;height:30px;background:linear-gradient(#fff 0,#fff 35%,#f4f5f7 40%,#f1f2f4 100%)"></div>
<div class="" style="left:573px;top:584px;width:29px;height:1px;background:#d8d8d8"></div>
<div class="" style="left:602px;top:584px;width:101px;height:1px;background:#d8d8d8"></div>
<span class="t " style="left:577px;top:562px;font-size:16.5px;letter-spacing:0.447px;line-height:18px;">12</span>
<span class="t " style="left:605.5px;top:562px;font-size:16.5px;letter-spacing:1.210px;line-height:18px;">111</span>
<div class="" style="left:573px;top:585px;width:29px;height:30px;background:linear-gradient(#fff 0,#fff 35%,#f4f5f7 40%,#f1f2f4 100%)"></div>
<div class="" style="left:573px;top:614px;width:29px;height:1px;background:#d8d8d8"></div>
<div class="" style="left:602px;top:614px;width:101px;height:1px;background:#d8d8d8"></div>
<span class="t " style="left:577px;top:592px;font-size:16.5px;letter-spacing:0.447px;line-height:18px;">13</span>
<span class="t " style="left:605.5px;top:592px;font-size:16.5px;letter-spacing:0.597px;line-height:18px;">112</span>
<div class="" style="left:573px;top:615px;width:29px;height:30px;background:linear-gradient(#fff 0,#fff 35%,#f4f5f7 40%,#f1f2f4 100%)"></div>
<div class="" style="left:573px;top:644px;width:29px;height:1px;background:#d8d8d8"></div>
<div class="" style="left:602px;top:644px;width:101px;height:1px;background:#d8d8d8"></div>
<span class="t " style="left:577px;top:622px;font-size:16.5px;letter-spacing:0.447px;line-height:18px;">14</span>
<span class="t " style="left:605.5px;top:622px;font-size:16.5px;letter-spacing:0.597px;line-height:18px;">113</span>
<div class="" style="left:573px;top:645px;width:29px;height:30px;background:linear-gradient(#fff 0,#fff 35%,#f4f5f7 40%,#f1f2f4 100%)"></div>
<div class="" style="left:573px;top:674px;width:29px;height:1px;background:#d8d8d8"></div>
<div class="" style="left:602px;top:674px;width:101px;height:1px;background:#d8d8d8"></div>
<span class="t " style="left:577px;top:652px;font-size:16.5px;letter-spacing:0.447px;line-height:18px;">15</span>
<span class="t " style="left:605.5px;top:652px;font-size:16.5px;letter-spacing:0.597px;line-height:18px;">114</span>
<div class="" style="left:573px;top:675px;width:29px;height:30px;background:linear-gradient(#fff 0,#fff 35%,#f4f5f7 40%,#f1f2f4 100%)"></div>
<div class="" style="left:573px;top:704px;width:29px;height:1px;background:#d8d8d8"></div>
<div class="" style="left:602px;top:704px;width:101px;height:1px;background:#d8d8d8"></div>
<span class="t " style="left:577px;top:682px;font-size:16.5px;letter-spacing:0.447px;line-height:18px;">16</span>
<span class="t " style="left:605.5px;top:682px;font-size:16.5px;letter-spacing:0.597px;line-height:18px;">115</span>
<div class="" style="left:573px;top:705px;width:29px;height:30px;background:linear-gradient(#fff 0,#fff 35%,#f4f5f7 40%,#f1f2f4 100%)"></div>
<div class="" style="left:573px;top:734px;width:29px;height:1px;background:#d8d8d8"></div>
<div class="" style="left:602px;top:734px;width:101px;height:1px;background:#d8d8d8"></div>
<span class="t " style="left:577px;top:712px;font-size:16.5px;letter-spacing:0.447px;line-height:18px;">17</span>
<span class="t " style="left:605.5px;top:712px;font-size:16.5px;letter-spacing:0.597px;line-height:18px;">116</span>
<div class="" style="left:573px;top:735px;width:29px;height:30px;background:linear-gradient(#fff 0,#fff 35%,#f4f5f7 40%,#f1f2f4 100%)"></div>
<div class="" style="left:573px;top:764px;width:29px;height:1px;background:#d8d8d8"></div>
<div class="" style="left:602px;top:764px;width:101px;height:1px;background:#d8d8d8"></div>
<span class="t " style="left:577px;top:742px;font-size:16.5px;letter-spacing:0.447px;line-height:18px;">18</span>
<span class="t " style="left:605.5px;top:742px;font-size:16.5px;letter-spacing:0.597px;line-height:18px;">117</span>
<div class="" style="left:573px;top:765px;width:29px;height:30px;background:linear-gradient(#fff 0,#fff 35%,#f4f5f7 40%,#f1f2f4 100%)"></div>
<div class="" style="left:573px;top:794px;width:29px;height:1px;background:#d8d8d8"></div>
<div class="" style="left:602px;top:794px;width:101px;height:1px;background:#d8d8d8"></div>
<span class="t " style="left:577px;top:772px;font-size:16.5px;letter-spacing:0.447px;line-height:18px;">19</span>
<span class="t " style="left:605.5px;top:772px;font-size:16.5px;letter-spacing:0.597px;line-height:18px;">118</span>
<div class="" style="left:573px;top:795px;width:29px;height:30px;background:linear-gradient(#fff 0,#fff 35%,#f4f5f7 40%,#f1f2f4 100%)"></div>
<div class="" style="left:573px;top:824px;width:29px;height:1px;background:#d8d8d8"></div>
<div class="" style="left:602px;top:824px;width:101px;height:1px;background:#d8d8d8"></div>
<span class="t " style="left:577px;top:802px;font-size:16.5px;letter-spacing:0.447px;line-height:18px;">20</span>
<span class="t " style="left:605.5px;top:802px;font-size:16.5px;letter-spacing:0.597px;line-height:18px;">119</span>
<div class="" style="left:573px;top:825px;width:29px;height:30px;background:linear-gradient(#fff 0,#fff 35%,#f4f5f7 40%,#f1f2f4 100%)"></div>
<div class="" style="left:573px;top:854px;width:29px;height:1px;background:#d8d8d8"></div>
<div class="" style="left:602px;top:854px;width:101px;height:1px;background:#d8d8d8"></div>
<span class="t " style="left:577px;top:832px;font-size:16.5px;letter-spacing:0.447px;line-height:18px;">21</span>
<span class="t " style="left:605.5px;top:832px;font-size:16.5px;letter-spacing:-0.015px;line-height:18px;">120</span>
<div class="" style="left:602px;top:225px;width:1px;height:630px;background:#d8d8d8"></div>
<div class="" style="left:702px;top:225px;width:1px;height:630px;background:#d8d8d8"></div>
<div class="" style="left:743px;top:140px;width:6px;height:829px;background:#f0f0f0"></div>
<div class="" style="left:761px;top:152px;width:500px;height:188px;background:#f0f0f0;border-right:1px solid #8a8a8a;border-bottom:1px solid #8a8a8a"></div>
<span class="t i" style="left:773px;top:165px;font-size:16.5px;letter-spacing:0.211px;line-height:18px;transform-origin:0 83.33%;">Watch list</span>
<div class="" style="left:772px;top:191px;width:476px;height:138px;background:#fff;border:1px solid #828790"></div>
<div class="hdr" style="left:773px;top:192px;width:474px;height:28px;"></div>
<div class="" style="left:773px;top:220px;width:474px;height:1px;background:#d5d5d5"></div>
<div class="" style="left:773px;top:221px;width:18px;height:107px;background:#f0f0f0"></div>
<div class="" style="left:791px;top:192px;width:1px;height:28px;background:#dedfe1"></div>
<div class="" style="left:891px;top:192px;width:1px;height:28px;background:#dedfe1"></div>
<div class="" style="left:991px;top:192px;width:1px;height:28px;background:#dedfe1"></div>
<span class="t " style="left:822px;top:199px;font-size:15.5px;letter-spacing:-0.615px;line-height:17px;">Name</span>
<span class="t " style="left:924.5px;top:199px;font-size:15.5px;letter-spacing:-0.748px;line-height:17px;">Value</span>
<div class="" style="left:773px;top:221px;width:18px;height:30px;background:linear-gradient(#fff 0,#fff 35%,#f4f5f7 40%,#f1f2f4 100%)"></div>
<div class="" style="left:773px;top:250px;width:18px;height:1px;background:#d8d8d8"></div>
<div class="" style="left:791px;top:250px;width:201px;height:1px;background:#d8d8d8"></div>
<span class="t " style="left:778px;top:229px;font-size:15.5px;letter-spacing:-0.820px;line-height:17px;">1</span>
<svg style="left:795.5px;top:227.2px" width="19" height="19" viewBox="0 0 20 20"><defs>
<radialGradient id="egw0" cx=".5" cy=".6" r=".6"><stop offset="0" stop-color="#f84858"/><stop offset=".7" stop-color="#e83848"/><stop offset="1" stop-color="#c82838"/></radialGradient>
<linearGradient id="ehw0" x1="0" y1="0" x2="0" y2="1"><stop offset="0" stop-color="#fff" stop-opacity=".6"/><stop offset="1" stop-color="#fff" stop-opacity=".05"/></linearGradient></defs>
<circle cx="10" cy="10" r="9.2" fill="url(#egw0)" stroke="#dca0a8" stroke-width="1.4"/>
<path d="M2.2 9.5 A7.8 7.8 0 0 1 17.8 9.5 Q10 6.5 2.2 9.5 Z" fill="url(#ehw0)"/>
<path d="M6.6 6.6 L13.4 13.4 M13.4 6.6 L6.6 13.4" stroke="#fff" stroke-width="3.1" stroke-linecap="round"/></svg>
<span class="t " style="left:821px;top:228px;font-size:15px;letter-spacing:-0.122px;line-height:17px;">theta.po...</span>
<span class="t " style="left:895.5px;top:228px;font-size:15px;letter-spacing:-0.704px;line-height:17px;">32.9988</span>
<div class="" style="left:773px;top:251px;width:18px;height:30px;background:linear-gradient(#fff 0,#fff 35%,#f4f5f7 40%,#f1f2f4 100%)"></div>
<div class="" style="left:773px;top:280px;width:18px;height:1px;background:#d8d8d8"></div>
<div class="" style="left:791px;top:280px;width:201px;height:1px;background:#d8d8d8"></div>
<span class="t " style="left:778px;top:259px;font-size:15.5px;letter-spacing:-0.820px;line-height:17px;">2</span>
<svg style="left:795.5px;top:257.2px" width="19" height="19" viewBox="0 0 20 20"><defs>
<radialGradient id="egw1" cx=".5" cy=".6" r=".6"><stop offset="0" stop-color="#f84858"/><stop offset=".7" stop-color="#e83848"/><stop offset="1" stop-color="#c82838"/></radialGradient>
<linearGradient id="ehw1" x1="0" y1="0" x2="0" y2="1"><stop offset="0" stop-color="#fff" stop-opacity=".6"/><stop offset="1" stop-color="#fff" stop-opacity=".05"/></linearGradient></defs>
<circle cx="10" cy="10" r="9.2" fill="url(#egw1)" stroke="#dca0a8" stroke-width="1.4"/>
<path d="M2.2 9.5 A7.8 7.8 0 0 1 17.8 9.5 Q10 6.5 2.2 9.5 Z" fill="url(#ehw1)"/>
<path d="M6.6 6.6 L13.4 13.4 M13.4 6.6 L6.6 13.4" stroke="#fff" stroke-width="3.1" stroke-linecap="round"/></svg>
<span class="t " style="left:821px;top:258px;font-size:15px;letter-spacing:-0.254px;line-height:17px;">omega....</span>
<span class="t " style="left:895.5px;top:258px;font-size:15px;letter-spacing:-1.065px;line-height:17px;">5.01</span>
<div class="" style="left:773px;top:281px;width:18px;height:30px;background:linear-gradient(#fff 0,#fff 35%,#f4f5f7 40%,#f1f2f4 100%)"></div>
<div class="" style="left:773px;top:310px;width:18px;height:1px;background:#d8d8d8"></div>
<div class="" style="left:791px;top:310px;width:201px;height:1px;background:#d8d8d8"></div>
<span class="t " style="left:778px;top:289px;font-size:15.5px;letter-spacing:-0.820px;line-height:17px;">3</span>
<span class="t " style="left:795px;top:288px;font-size:15px;letter-spacing:-0.393px;line-height:17px;">expo.measu...</span>
<span class="t " style="left:899px;top:288px;font-size:15px;letter-spacing:-1.542px;line-height:17px;">4s</span>
<div class="" style="left:791px;top:221px;width:1px;height:90px;background:#d8d8d8"></div>
<div class="" style="left:891px;top:221px;width:1px;height:90px;background:#d8d8d8"></div>
<div class="" style="left:991px;top:221px;width:1px;height:90px;background:#d8d8d8"></div>
<div class="" style="left:749px;top:352px;width:522px;height:6px;background:#f0f0f0"></div>
<div class="" style="left:749px;top:357px;width:522px;height:26px;background:linear-gradient(#fff 0,#fdfdff 22%,#e6e9f6 34%,#d6dbee 40%,#d8ddf0 70%,#e2e6f4 100%)"></div>
<div class="" style="left:749px;top:383px;width:522px;height:1px;background:#a3a7b8"></div>
<div class="" style="left:749px;top:415px;width:522px;height:1px;background:#a0a0a0"></div>
<span class="t " style="left:757px;top:362px;font-size:15.5px;letter-spacing:0.026px;line-height:17px;color:#a6a6a6;">Option</span>
<span class="t " style="left:819px;top:362px;font-size:15.5px;letter-spacing:-0.784px;line-height:17px;color:#a6a6a6;">Log File&#39;s</span>
<div class="" style="left:753px;top:388px;width:2px;height:23px;background:repeating-linear-gradient(#b0b0b0 0,#b0b0b0 1px,#fff 1px,#fff 3px)"></div>
<svg style="left:764px;top:388px" width="23" height="24" viewBox="0 0 23 24"><defs>
<linearGradient id="sw1" x1="0" y1="0" x2="0" y2="1"><stop offset="0" stop-color="#ffb050"/><stop offset="1" stop-color="#e87010"/></linearGradient>
<linearGradient id="sw2" x1="0" y1="0" x2="0" y2="1"><stop offset="0" stop-color="#58d048"/><stop offset="1" stop-color="#209018"/></linearGradient></defs>
<path d="M2 12.5 L2 5.5 Q2 4.5 3 4.5 L12.5 4.5 L12.5 0.8 L21.5 7.3 L12.5 13.8 L12.5 10 L7.2 10 L7.2 12.5 Z" fill="url(#sw1)" stroke="#b85a08" stroke-width=".9" stroke-linejoin="round"/>
<path d="M21 11 L21 18 Q21 19 20 19 L10.5 19 L10.5 22.8 L1.5 16.3 L10.5 9.8 L10.5 13.6 L15.8 13.6 L15.8 11 Z" fill="url(#sw2)" stroke="#187010" stroke-width=".9" stroke-linejoin="round"/></svg>
<svg style="left:793px;top:387px" width="24" height="25" viewBox="0 0 24 25">
<path d="M2.5 22.5 Q5 22 6 18 L8 8 L12 6.5 L12 22 Z" fill="#f0f2f8" stroke="#d8dce6" stroke-width=".7"/>
<path d="M11 24 L13.5 4.5 L20.5 1.8 L20.5 19.5 Z" fill="#9cbcf0" stroke="#88a8e0" stroke-width=".6"/>
<path d="M12 7 L15.5 5.2 L15.5 21 L11 24 Z" fill="#e4ecfa"/>
<path d="M3 23 L11 24.3 L12 22 L4 21.5 Z" fill="#d8dce6" opacity=".8"/></svg>
<div class="" style="left:822px;top:388px;width:1px;height:23px;background:#c4c4c4"></div>
<div class="" style="left:945px;top:388px;width:1px;height:23px;background:#c4c4c4"></div>
<svg style="left:828.8px;top:388.6px" width="22.4" height="22.4" viewBox="-0.5 -0.5 23 23"><defs><radialGradient id="nbfirst" cx=".5" cy=".25" r=".8"><stop offset="0" stop-color="#60b8e8"/><stop offset=".55" stop-color="#1274b8"/><stop offset="1" stop-color="#0c5088"/></radialGradient></defs>
<circle cx="11" cy="11" r="10.4" fill="url(#nbfirst)" stroke="#083860" stroke-width="1.5"/><rect x="6" y="7" width="2.4" height="8" fill="#fff"/><path d="M16 6.8 L16 15.2 L9 11 Z" fill="#fff"/></svg>
<svg style="left:857.8px;top:388.6px" width="22.4" height="22.4" viewBox="-0.5 -0.5 23 23"><defs><radialGradient id="nbprev" cx=".5" cy=".25" r=".8"><stop offset="0" stop-color="#d0f448"/><stop offset=".55" stop-color="#68c818"/><stop offset="1" stop-color="#3c9800"/></radialGradient></defs>
<circle cx="11" cy="11" r="10.4" fill="url(#nbprev)" stroke="#2c6c08" stroke-width="1.5"/><path d="M17 9.6 L10.8 9.6 L10.8 6 L4.6 11 L10.8 16 L10.8 12.4 L17 12.4 Z" fill="#fff"/></svg>
<svg style="left:886.8px;top:388.6px" width="22.4" height="22.4" viewBox="-0.5 -0.5 23 23"><defs><radialGradient id="nbnext" cx=".5" cy=".25" r=".8"><stop offset="0" stop-color="#d0f448"/><stop offset=".55" stop-color="#68c818"/><stop offset="1" stop-color="#3c9800"/></radialGradient></defs>
<circle cx="11" cy="11" r="10.4" fill="url(#nbnext)" stroke="#2c6c08" stroke-width="1.5"/><path d="M5 9.6 L11.2 9.6 L11.2 6 L17.4 11 L11.2 16 L11.2 12.4 L5 12.4 Z" fill="#fff"/></svg>
<svg style="left:915.8px;top:388.6px" width="22.4" height="22.4" viewBox="-0.5 -0.5 23 23"><defs><radialGradient id="nblast" cx=".5" cy=".25" r=".8"><stop offset="0" stop-color="#60b8e8"/><stop offset=".55" stop-color="#1274b8"/><stop offset="1" stop-color="#0c5088"/></radialGradient></defs>
<circle cx="11" cy="11" r="10.4" fill="url(#nblast)" stroke="#083860" stroke-width="1.5"/><rect x="13.6" y="7" width="2.4" height="8" fill="#fff"/><path d="M6 6.8 L6 15.2 L13 11 Z" fill="#fff"/></svg>
<div class="" style="left:949px;top:387px;width:29px;height:26px;background:linear-gradient(#d8d8d8,#ececec);border:1px solid #8a8a8a;border-radius:3px;box-shadow:inset 1px 1px 2px rgba(0,0,0,.2)"></div>
<svg style="left:951px;top:388px" width="25" height="24" viewBox="0 0 25 24">
<rect x="3.3" y="2.5" width="15.4" height="17.5" fill="#ececec" stroke="#8c8c8c" stroke-width="1"/>
<path d="M9.3 4.2 L18.6 4.2 L18.6 11.6 L22.6 11.6 L14 21.8 L5.4 11.6 L9.3 11.6 Z" fill="#5cc038" stroke="#3a8a24" stroke-width=".9" stroke-linejoin="round"/>
<path d="M10.3 5.2 L17.6 5.2 L17.6 11 L10.3 11 Z" fill="#90dc68" opacity=".75"/></svg>
<div class="" style="left:754px;top:421px;width:513px;height:544px;background:#fff;border:1px solid #828790"></div>
<span class="t " style="left:759.5px;top:428px;font-size:16px;letter-spacing:0.112px;line-height:17px;">IBR2M_INSTRUMENT_logfile_15_Apr_14_09-32-51.xml</span>
<div class="" style="left:759px;top:453px;width:502px;height:507px;background:#fff;border:1px solid #828790"></div>
<div class="hdr" style="left:760px;top:454px;width:500px;height:29px;"></div>
<div class="" style="left:760px;top:483px;width:500px;height:1px;background:#d5d5d5"></div>
<div class="" style="left:809px;top:454px;width:1px;height:29px;background:#dedfe1"></div>
<div class="" style="left:929px;top:454px;width:1px;height:29px;background:#dedfe1"></div>
<span class="t " style="left:765px;top:462px;font-size:13px;letter-spacing:1.770px;line-height:15px;">#</span>
<span class="t " style="left:815px;top:461px;font-size:15.5px;letter-spacing:-0.423px;line-height:17px;">Time</span>
<span class="t " style="left:934.5px;top:461px;font-size:15.5px;letter-spacing:-0.866px;line-height:17px;">Message</span>
<div style="left:760px;top:484px;width:500px;height:442px;overflow:hidden">
<div class="" style="left:0px;top:0px;width:500px;height:26px;background:#aaff7f"></div>
<div class="" style="left:0px;top:25px;width:500px;height:1px;background:#848884"></div>
<span class="t " style="left:3.2px;top:4px;font-size:15px;letter-spacing:-0.814px;line-height:17px;">139</span>
<span class="t " style="left:53.2px;top:7px;font-size:12.5px;letter-spacing:0.207px;line-height:14px;-webkit-text-stroke:0.2px #000;">15.04.2014 10:0...</span>
<span class="t " style="left:173.3px;top:7px;font-size:12.5px;letter-spacing:0.375px;line-height:14px;-webkit-text-stroke:0.2px #000;">m_goto: omega go to pos=1.0 with res=(0, &#39;server moto</span>
<div class="" style="left:0px;top:26px;width:500px;height:26px;background:#aaff7f"></div>
<div class="" style="left:0px;top:51px;width:500px;height:1px;background:#848884"></div>
<span class="t " style="left:3.2px;top:30px;font-size:15px;letter-spacing:-0.814px;line-height:17px;">142</span>
<span class="t " style="left:53.2px;top:33px;font-size:12.5px;letter-spacing:0.207px;line-height:14px;-webkit-text-stroke:0.2px #000;">15.04.2014 10:0...</span>
<span class="t " style="left:173.3px;top:30px;font-size:15px;letter-spacing:0.006px;line-height:17px;">omega =2.0</span>
<div class="" style="left:0px;top:52px;width:500px;height:26px;background:#aaff7f"></div>
<div class="" style="left:0px;top:77px;width:500px;height:1px;background:#848884"></div>
<span class="t " style="left:3.2px;top:56px;font-size:15px;letter-spacing:-0.814px;line-height:17px;">146</span>
<span class="t " style="left:53.2px;top:59px;font-size:12.5px;letter-spacing:0.207px;line-height:14px;-webkit-text-stroke:0.2px #000;">15.04.2014 10:0...</span>
<span class="t " style="left:173.3px;top:59px;font-size:12.5px;letter-spacing:0.375px;line-height:14px;-webkit-text-stroke:0.2px #000;">m_goto: omega go to pos=2.0 with res=(0, &#39;server moto</span>
<div class="" style="left:0px;top:78px;width:500px;height:26px;background:#aaff7f"></div>
<div class="" style="left:0px;top:103px;width:500px;height:1px;background:#848884"></div>
<span class="t " style="left:3.2px;top:82px;font-size:15px;letter-spacing:-0.814px;line-height:17px;">149</span>
<span class="t " style="left:53.2px;top:85px;font-size:12.5px;letter-spacing:0.207px;line-height:14px;-webkit-text-stroke:0.2px #000;">15.04.2014 10:0...</span>
<span class="t " style="left:173.3px;top:82px;font-size:15px;letter-spacing:0.006px;line-height:17px;">omega =3.0</span>
<div class="" style="left:0px;top:104px;width:500px;height:26px;background:#fff"></div>
<div class="" style="left:0px;top:129px;width:500px;height:1px;background:#848884"></div>
<span class="t " style="left:3.2px;top:108px;font-size:15px;letter-spacing:-0.814px;line-height:17px;">152</span>
<span class="t " style="left:53.2px;top:111px;font-size:12.5px;letter-spacing:0.207px;line-height:14px;-webkit-text-stroke:0.2px #000;">15.04.2014 10:0...</span>
<span class="t " style="left:173.3px;top:108px;font-size:15px;letter-spacing:-0.078px;line-height:17px;">Module aborted (0, server_motors:ok)</span>
<div class="" style="left:0px;top:130px;width:500px;height:26px;background:#aaff7f"></div>
<div class="" style="left:0px;top:155px;width:500px;height:1px;background:#848884"></div>
<span class="t " style="left:3.2px;top:134px;font-size:15px;letter-spacing:-0.814px;line-height:17px;">156</span>
<span class="t " style="left:53.2px;top:137px;font-size:12.5px;letter-spacing:0.207px;line-height:14px;-webkit-text-stroke:0.2px #000;">15.04.2014 10:0...</span>
<span class="t " style="left:173.3px;top:137px;font-size:12.5px;letter-spacing:0.375px;line-height:14px;-webkit-text-stroke:0.2px #000;">m_goto: omega go to pos=3.0 with res=(1, &#39;server moto</span>
<div class="" style="left:0px;top:156px;width:500px;height:26px;background:#aaff7f"></div>
<div class="" style="left:0px;top:181px;width:500px;height:1px;background:#848884"></div>
<span class="t " style="left:3.2px;top:160px;font-size:15px;letter-spacing:-0.814px;line-height:17px;">158</span>
<span class="t " style="left:53.2px;top:163px;font-size:12.5px;letter-spacing:0.207px;line-height:14px;-webkit-text-stroke:0.2px #000;">15.04.2014 10:0...</span>
<span class="t " style="left:173.3px;top:160px;font-size:15px;letter-spacing:-0.046px;line-height:17px;">End of experiment</span>
<div class="" style="left:0px;top:182px;width:500px;height:26px;background:#aaff7f"></div>
<div class="" style="left:0px;top:207px;width:500px;height:1px;background:#848884"></div>
<span class="t " style="left:3.2px;top:186px;font-size:15px;letter-spacing:-0.814px;line-height:17px;">163</span>
<span class="t " style="left:53.2px;top:189px;font-size:12.5px;letter-spacing:0.207px;line-height:14px;-webkit-text-stroke:0.2px #000;">15.04.2014 10:0...</span>
<span class="t " style="left:173.3px;top:186px;font-size:15px;letter-spacing:-0.287px;line-height:17px;">comm_dll v.1.4 (Nov 18 2012 22:28:24)</span>
<div class="" style="left:0px;top:208px;width:500px;height:26px;background:#aaff7f"></div>
<div class="" style="left:0px;top:233px;width:500px;height:1px;background:#848884"></div>
<span class="t " style="left:3.2px;top:212px;font-size:15px;letter-spacing:-0.814px;line-height:17px;">164</span>
<span class="t " style="left:53.2px;top:215px;font-size:12.5px;letter-spacing:0.207px;line-height:14px;-webkit-text-stroke:0.2px #000;">15.04.2014 10:0...</span>
<div class="" style="left:174px;top:221px;width:280.5px;height:1px;background:repeating-linear-gradient(90deg,#0c1408 0,#0c1408 4px,transparent 4px,transparent 5.56px)"></div>
<div class="" style="left:0px;top:234px;width:500px;height:26px;background:#aaff7f"></div>
<div class="" style="left:0px;top:259px;width:500px;height:1px;background:#848884"></div>
<span class="t " style="left:3.2px;top:238px;font-size:15px;letter-spacing:-0.814px;line-height:17px;">165</span>
<span class="t " style="left:53.2px;top:241px;font-size:12.5px;letter-spacing:0.207px;line-height:14px;-webkit-text-stroke:0.2px #000;">15.04.2014 10:0...</span>
<div class="" style="left:174px;top:247px;width:280.5px;height:1px;background:repeating-linear-gradient(90deg,#0c1408 0,#0c1408 4px,transparent 4px,transparent 5.56px)"></div>
<div class="" style="left:0px;top:260px;width:500px;height:26px;background:#aaff7f"></div>
<div class="" style="left:0px;top:285px;width:500px;height:1px;background:#848884"></div>
<span class="t " style="left:3.2px;top:264px;font-size:15px;letter-spacing:-0.814px;line-height:17px;">166</span>
<span class="t " style="left:53.2px;top:267px;font-size:12.5px;letter-spacing:0.207px;line-height:14px;-webkit-text-stroke:0.2px #000;">15.04.2014 10:0...</span>
<span class="t " style="left:173.3px;top:264px;font-size:15px;letter-spacing:0.025px;line-height:17px;">IFM_D3 protocol file</span>
<div class="" style="left:0px;top:286px;width:500px;height:26px;background:#aaff7f"></div>
<div class="" style="left:0px;top:311px;width:500px;height:1px;background:#848884"></div>
<span class="t " style="left:3.2px;top:290px;font-size:15px;letter-spacing:-0.814px;line-height:17px;">167</span>
<span class="t " style="left:53.2px;top:293px;font-size:12.5px;letter-spacing:0.207px;line-height:14px;-webkit-text-stroke:0.2px #000;">15.04.2014 10:0...</span>
<div class="" style="left:174px;top:299px;width:280.5px;height:1px;background:repeating-linear-gradient(90deg,#0c1408 0,#0c1408 4px,transparent 4px,transparent 5.56px)"></div>
<div class="" style="left:0px;top:312px;width:500px;height:26px;background:#aaff7f"></div>
<div class="" style="left:0px;top:337px;width:500px;height:1px;background:#848884"></div>
<span class="t " style="left:3.2px;top:316px;font-size:15px;letter-spacing:-0.814px;line-height:17px;">168</span>
<span class="t " style="left:53.2px;top:319px;font-size:12.5px;letter-spacing:0.207px;line-height:14px;-webkit-text-stroke:0.2px #000;">15.04.2014 10:0...</span>
<span class="t " style="left:173.3px;top:316px;font-size:15px;letter-spacing:-0.201px;line-height:17px;">UserName = ak&nbsp; Sample = new_test</span>
<div class="" style="left:0px;top:338px;width:500px;height:26px;background:#aaff7f"></div>
<div class="" style="left:0px;top:363px;width:500px;height:1px;background:#848884"></div>
<span class="t " style="left:3.2px;top:342px;font-size:15px;letter-spacing:-0.814px;line-height:17px;">169</span>
<span class="t " style="left:53.2px;top:345px;font-size:12.5px;letter-spacing:0.207px;line-height:14px;-webkit-text-stroke:0.2px #000;">15.04.2014 10:0...</span>
<div class="" style="left:174px;top:351px;width:332px;height:1px;background:repeating-linear-gradient(90deg,#0c1408 0,#0c1408 4px,transparent 4px,transparent 5.56px)"></div>
<div class="" style="left:0px;top:364px;width:500px;height:26px;background:#aaff7f"></div>
<div class="" style="left:0px;top:389px;width:500px;height:1px;background:#848884"></div>
<span class="t " style="left:3.2px;top:368px;font-size:15px;letter-spacing:-0.814px;line-height:17px;">173</span>
<span class="t " style="left:53.2px;top:371px;font-size:12.5px;letter-spacing:0.207px;line-height:14px;-webkit-text-stroke:0.2px #000;">15.04.2014 10:0...</span>
<span class="t " style="left:173.3px;top:371px;font-size:12.5px;letter-spacing:0.413px;line-height:14px;-webkit-text-stroke:0.2px #000;">m_goto: theta go to pos=33.0 with res=(0, &#39;server motor</span>
<div class="" style="left:0px;top:390px;width:500px;height:26px;background:#aaff7f"></div>
<div class="" style="left:0px;top:415px;width:500px;height:1px;background:#848884"></div>
<span class="t " style="left:3.2px;top:394px;font-size:15px;letter-spacing:-0.814px;line-height:17px;">174</span>
<span class="t " style="left:53.2px;top:397px;font-size:12.5px;letter-spacing:0.207px;line-height:14px;-webkit-text-stroke:0.2px #000;">15.04.2014 10:0...</span>
<span class="t " style="left:173.3px;top:394px;font-size:15px;letter-spacing:0.006px;line-height:17px;">omega =4.0</span>
<div class="" style="left:0px;top:416px;width:500px;height:26px;background:#aaff7f"></div>
<div class="" style="left:0px;top:441px;width:500px;height:1px;background:#848884"></div>
<span class="t " style="left:3.2px;top:420px;font-size:15px;letter-spacing:-0.814px;line-height:17px;">178</span>
<span class="t " style="left:53.2px;top:423px;font-size:12.5px;letter-spacing:0.207px;line-height:14px;-webkit-text-stroke:0.2px #000;">15.04.2014 10:0...</span>
<span class="t " style="left:173.3px;top:423px;font-size:12.5px;letter-spacing:0.375px;line-height:14px;-webkit-text-stroke:0.2px #000;">m_goto: omega go to pos=4.0 with res=(0, &#39;server moto</span>
<div class="" style="left:0px;top:0px;width:1px;height:442px;background:#707470"></div>
<div class="" style="left:49px;top:0px;width:1px;height:442px;background:#848884"></div>
<div class="" style="left:169px;top:0px;width:1px;height:442px;background:#848884"></div>
</div>
<div class="" style="left:760px;top:939px;width:500px;height:20px;background:#f0f0f0"></div>
<div class="" style="left:782px;top:940px;width:150px;height:18px;background:linear-gradient(#f4f4f4 0,#e8e8e8 45%,#d4d4d4 50%,#c8c8c8 100%);border:1px solid #909090;border-radius:2px"></div>
<svg style="left:851px;top:944px" width="10" height="9" viewBox="0 0 10 9" shape-rendering="crispEdges"><rect x="1" y="0" width="1" height="8" fill="#6a6a6a"/><rect x="4" y="0" width="1" height="8" fill="#6a6a6a"/><rect x="7" y="0" width="1" height="8" fill="#6a6a6a"/><rect x="2" y="0" width="1" height="8" fill="#fff"/><rect x="5" y="0" width="1" height="8" fill="#fff"/><rect x="8" y="0" width="1" height="8" fill="#fff"/></svg>
<svg style="left:765px;top:944px" width="8" height="9" viewBox="0 0 8 9"><path d="M6 0.5 L6 8.5 L1.5 4.5 Z" fill="#404040"/></svg>
<svg style="left:1245px;top:944px" width="8" height="9" viewBox="0 0 8 9"><path d="M2 0.5 L2 8.5 L6.5 4.5 Z" fill="#404040"/></svg>
</body></html>
